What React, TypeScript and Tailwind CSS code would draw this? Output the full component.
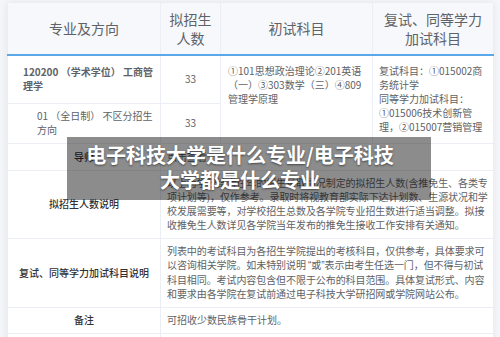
import React from "react";

const font = { fontFamily: '"Noto Sans CJK SC", "Noto Sans", sans-serif' };
const latin = { fontFamily: '"Liberation Sans", sans-serif' };

const th = "border-x border-[#ebeef5] text-center align-middle text-[14px] leading-[19px] font-normal text-[#5f6266]";
const td = "border border-[#ebeef5] text-[10px] leading-[14px] text-[#606266]";
const label = "border border-[#ebeef5] text-center align-middle text-[10px] leading-[14px] font-medium text-[#303133]";

export default function App() {
  return (
    <div className="relative w-[500px] h-[337px] overflow-hidden bg-[#f4f6fa]" style={font}>
      {/* Table card */}
      <div className="ml-[7px] mt-[3px] w-[486px] bg-white shadow-[0_0_8px_rgba(0,0,0,0.08)]">
        <table className="w-[486px] table-fixed border-collapse">
          <colgroup>
            <col className="w-[153px]" />
            <col className="w-[60px]" />
            <col className="w-[152px]" />
            <col className="w-[121px]" />
          </colgroup>
          <thead>
            <tr className="h-[52px] bg-[#f6f8fb] border-b-2 border-[#5aa8ea]">
              <th className={th}>专业及方向</th>
              <th className={th}>
                拟招生
                <br />
                人数
              </th>
              <th className={th}>初试科目</th>
              <th className={th}>
                复试、同等学力
                <br />
                加试科目
              </th>
            </tr>
          </thead>
          <tbody>
            <tr className="h-[48px]">
              <td className={`${td} pl-[15px] pr-[6px] align-middle font-semibold text-[#303133]`}>
                120200 （学术学位） 工商管理学
              </td>
              <td className={`${td} text-center align-middle`}>33</td>
              <td rowSpan={2} className={`${td} px-[7px] pt-[8px] align-top`}>
                ①101思想政治理论②201英语（一）③303数学（三）④809管理学原理
              </td>
              <td rowSpan={2} className={`${td} px-[6px] align-middle`}>
                复试科目：①015002商务统计学
                <br />
                同等学力加试科目：①015006技术创新管理，②015007营销管理
              </td>
            </tr>
            <tr className="h-[40px]">
              <td className={`${td} pl-[29px] pr-[6px] align-middle`}>01 （全日制） 不区分招生方向</td>
              <td className={`${td} text-center align-middle`}>33</td>
            </tr>
            <tr className="h-[27px]">
              <td className={label}>导师</td>
              <td colSpan={3} className={`${td} pl-[6px] align-middle text-[#3a5fd6]`}>
                点击查看
              </td>
            </tr>
            <tr className="h-[68px]">
              <td className={label}>拟招生人数说明</td>
              <td colSpan={3} className={`${td} pl-[6px] pr-0 align-middle tracking-[-0.08px]`}>
                以上为学校结合往年的招生录取情况制定的拟招生人数(含推免生、各类专项计划等)，仅作参考。录取时将视教育部实际下达计划数、生源状况和学校发展需要等，对学校招生总数及各学院专业招生数进行适当调整。拟接收推免生人数详见各学院当年发布的推免生接收工作安排有关通知。
              </td>
            </tr>
            <tr className="h-[69px]">
              <td className={label}>复试、同等学力加试科目说明</td>
              <td colSpan={3} className={`${td} pl-[6px] pr-0 align-middle tracking-[-0.08px]`}>
                列表中的考试科目为各招生学院提出的考核科目，仅供参考，具体要求可以咨询相关学院。如未特别说明 <span style={latin}>“</span>或<span style={latin}>”</span>表示由考生任选一门，但不得与初试科目相同。考试内容包含但不限于公布的科目范围。具体复试形式、内容和要求由各学院在复试前通过电子科技大学研招网或学院网站公布。
              </td>
            </tr>
            <tr className="h-[26px]">
              <td className={label}>备注</td>
              <td colSpan={3} className={`${td} pl-[6px] align-middle`}>
                可招收少数民族骨干计划。
              </td>
            </tr>
            <tr className="h-[24px]">
              <td className={td}></td>
              <td colSpan={3} className={td}></td>
            </tr>
          </tbody>
        </table>
      </div>

      {/* Title overlay */}
      <div className="absolute left-[67px] top-[137px] w-[364px] h-[63px] bg-black/45 pl-[4px] pr-[22px] pt-[5px] text-center text-[20px] leading-[25px] font-bold text-white [text-shadow:0_1px_2px_rgba(0,0,0,0.5)]">
        电子科技大学是什么专业/电子科技
        <br />
        大学都是什么专业
      </div>
    </div>
  );
}
